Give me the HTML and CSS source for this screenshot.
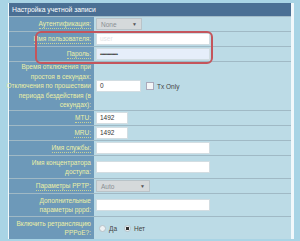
FILE: index.html
```html
<!DOCTYPE html>
<html>
<head>
    <meta charset="utf-8">
    <title>Настройка учетной записи</title>
    <link rel="stylesheet" href="styles.css">
</head>
<body>
    <div class="page">
        <div class="panel">
            <div class="head">Настройка учетной записи</div>

            <div class="row">
                <div class="label"><span class="u">Аутентификация:</span></div>
                <div class="field"><span class="select sel-none">None <i>▼</i></span></div>
            </div>
            <div class="row">
                <div class="label"><span class="u">Имя пользователя:</span></div>
                <div class="field"><span class="input wide blurred">user</span></div>
            </div>
            <div class="row">
                <div class="label"><span class="u">Пароль:</span></div>
                <div class="field"><span class="input wide pass">••••••••••••••</span></div>
            </div>
            <div class="row tall">
                <div class="label">Время отключения при<br>простоя в секундах:<br>Отключения по прошествии<br>периода бездействия (в<br>секундах):</div>
                <div class="field">
                    <span class="input short">0</span>
                    <span class="check"></span>
                    <span class="opt">Tx Only</span>
                </div>
            </div>
            <div class="row">
                <div class="label"><span class="u">MTU:</span></div>
                <div class="field"><span class="input tiny">1492</span></div>
            </div>
            <div class="row">
                <div class="label"><span class="u">MRU:</span></div>
                <div class="field"><span class="input tiny">1492</span></div>
            </div>
            <div class="row">
                <div class="label"><span class="u">Имя службы:</span></div>
                <div class="field"><span class="input wide"></span></div>
            </div>
            <div class="row two">
                <div class="label">Имя концентратора<br>доступа:</div>
                <div class="field"><span class="input wide"></span></div>
            </div>
            <div class="row">
                <div class="label"><span class="u">Параметры PPTP:</span></div>
                <div class="field"><span class="select sel-auto">Auto <i>▼</i></span></div>
            </div>
            <div class="row two">
                <div class="label">Дополнительные<br>параметры pppd:</div>
                <div class="field"><span class="input wide"></span></div>
            </div>
            <div class="row two last">
                <div class="label">Включить ретрансляцию<br>PPPoE?:</div>
                <div class="field">
                    <span class="radio"></span><span class="opt">Да</span>
                    <span class="radio on"></span><span class="opt">Нет</span>
                </div>
            </div>

            <div class="mark"></div>
        </div>
    </div>
</body>
</html>
```

FILE: styles.css
```css
body {
    margin: 0;
    background-color: #a9d4e5;
    font-family: "Liberation Sans", Arial, sans-serif;
    font-size: 6.5px;
}

.page {
    padding: 3px 6px 4px 8px;
}

.panel {
    position: relative;
    background-color: #bcdbe6;
    border-left: 1px solid #f2f8fb;
    border-right: 3px solid #f2f8fb;
}

.head {
    background-color: #4a6f94;
    color: #fff;
    height: 13px;
    line-height: 13px;
    padding-left: 3px;
    font-size: 6.8px;
    border-bottom: 1px solid #a3bcc8;
}

.row {
    display: grid;
    grid-template-columns: 85px 1fr;
    height: 14px;
    border-bottom: 1px solid #a0b9c5;
}

.row.tall {
    height: 48px;
}

.row.two {
    height: 22px;
}

.row.last {
    border-bottom: none;
}

.label {
    background-color: #6d99b9;
    color: #ecf0a6;
    text-align: right;
    padding: 0 3px 0 2px;
    line-height: 9.4px;
    white-space: nowrap;
    display: flex;
    align-items: center;
    justify-content: flex-end;
}

.u {
    border-bottom: 1px dotted #c9d396;
    line-height: 8px;
}

.field {
    display: flex;
    align-items: center;
    padding-left: 2px;
    color: #333;
}

.input {
    display: inline-block;
    height: 10px;
    line-height: 10px;
    background-color: #fff;
    border: 1px solid #d2dde2;
    padding: 0 3px;
    font-size: 6.5px;
}

.input.wide {
    width: 106px;
}

.input.short {
    width: 37px;
}

.input.tiny {
    width: 24px;
}

.input.pass {
    background-color: #e6eefa;
    font-size: 5px;
    letter-spacing: -0.5px;
}

.input.blurred {
    color: #dfe3e6;
}

.select {
    display: inline-flex;
    justify-content: space-between;
    align-items: center;
    height: 10px;
    padding: 0 4px;
    background-color: #d5d9db;
    border: 1px solid #b9c3c8;
    color: #8a8f93;
    font-size: 6.5px;
}

.select i {
    font-style: normal;
    font-size: 5px;
    color: #555;
}

.sel-none {
    width: 36px;
}

.sel-auto {
    width: 44px;
}

.check {
    width: 6px;
    height: 6px;
    margin-left: 5px;
    border: 1px solid #aab;
    background-color: #f4f6f7;
}

.opt {
    margin-left: 3px;
    color: #444;
    font-size: 6.5px;
}

.radio {
    width: 7px;
    height: 7px;
    margin-left: 3px;
    border-radius: 50%;
    border: 1px solid #b8c2c7;
    background-color: #eef2f4;
    box-sizing: border-box;
}

.radio + .opt {
    margin-right: 4px;
}

.radio.on {
    background: radial-gradient(circle, #333 0 1.5px, #eef2f4 2px);
}

.mark {
    position: absolute;
    left: 26px;
    top: 28px;
    width: 174px;
    height: 29px;
    border: 2px solid #c4555c;
    border-radius: 6px;
}
```
